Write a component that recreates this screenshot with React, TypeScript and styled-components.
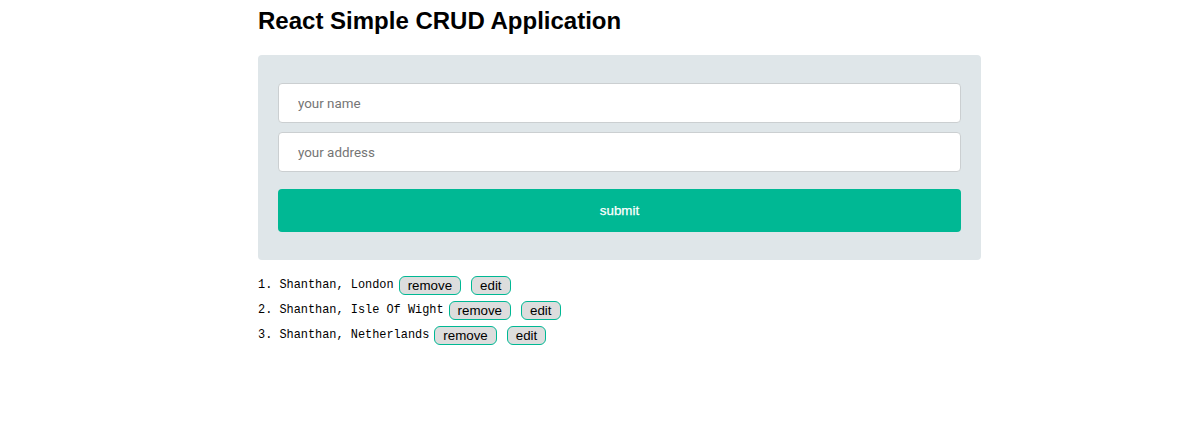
import React, { useState } from "react";
import styled, { createGlobalStyle } from "styled-components";

const GlobalStyle = createGlobalStyle`
  html, body {
    margin: 0;
    padding: 0;
    background: #ffffff;
  }
  body {
    font-family: "Liberation Sans", Arial, sans-serif;
    color: #000;
  }
`;

const Page = styled.div`
  width: 723px;
  padding: 7px 0 0 258px;
`;

const Title = styled.h1`
  margin: 0 0 20px;
  font-family: "Liberation Sans", Arial, sans-serif;
  font-size: 24px;
  font-weight: 700;
  line-height: 28px;
  color: #000;
`;

const Panel = styled.form`
  display: flex;
  flex-direction: column;
  background: #dfe6e9;
  border-radius: 4px;
  padding: 28px 20px;
`;

const Field = styled.input`
  box-sizing: border-box;
  height: 40px;
  width: 100%;
  margin: 0 0 9px;
  padding: 0 19px;
  border: 1px solid #cbcfd1;
  border-radius: 4px;
  background: #fff;
  font-family: Roboto, "Liberation Sans", sans-serif;
  font-size: 13.4px;
  color: #333;
  outline: none;

  &::placeholder {
    color: #757575;
  }
`;

const Submit = styled.button`
  height: 43px;
  margin-top: 8px;
  border: none;
  border-radius: 4px;
  background: #00b894;
  color: #fff;
  font-family: "Liberation Sans", Arial, sans-serif;
  font-size: 13.33px;
  font-weight: 500;
  -webkit-text-stroke: 0.25px #fff;
  cursor: pointer;
`;

const List = styled.ol`
  margin: 16px 0 0;
  padding: 0;
  list-style-position: inside;
  font-family: "Liberation Mono", "DejaVu Sans Mono", monospace;
  font-size: 11.9px;
  color: #000;
`;

const Item = styled.li`
  height: 19px;
  line-height: 19px;
  margin-bottom: 6px;
`;

const SmallButton = styled.button`
  display: inline-block;
  vertical-align: top;
  height: 19px;
  margin: 0 5px;
  padding: 0 8px;
  border: 1px solid #00b894;
  border-radius: 6px;
  background: #dddddd;
  color: #000;
  font-family: "Liberation Sans", Arial, sans-serif;
  font-size: 13.33px;
  line-height: 16px;
  cursor: pointer;
`;

type Entry = { name: string; address: string };

export default function App() {
  const [items] = useState<Entry[]>([
    { name: "Shanthan", address: "London" },
    { name: "Shanthan", address: "Isle Of Wight" },
    { name: "Shanthan", address: "Netherlands" },
  ]);

  return (
    <>
      <GlobalStyle />
      <Page>
        <Title>React Simple CRUD Application</Title>
        <Panel onSubmit={(e) => e.preventDefault()}>
          <Field type="text" placeholder="your name" />
          <Field type="text" placeholder="your address" />
          <Submit type="submit">submit</Submit>
        </Panel>
        <List>
          {items.map((it, i) => (
            <Item key={i}>
              {it.name}, {it.address}
              <SmallButton type="button">remove</SmallButton>
              <SmallButton type="button">edit</SmallButton>
            </Item>
          ))}
        </List>
      </Page>
    </>
  );
}
